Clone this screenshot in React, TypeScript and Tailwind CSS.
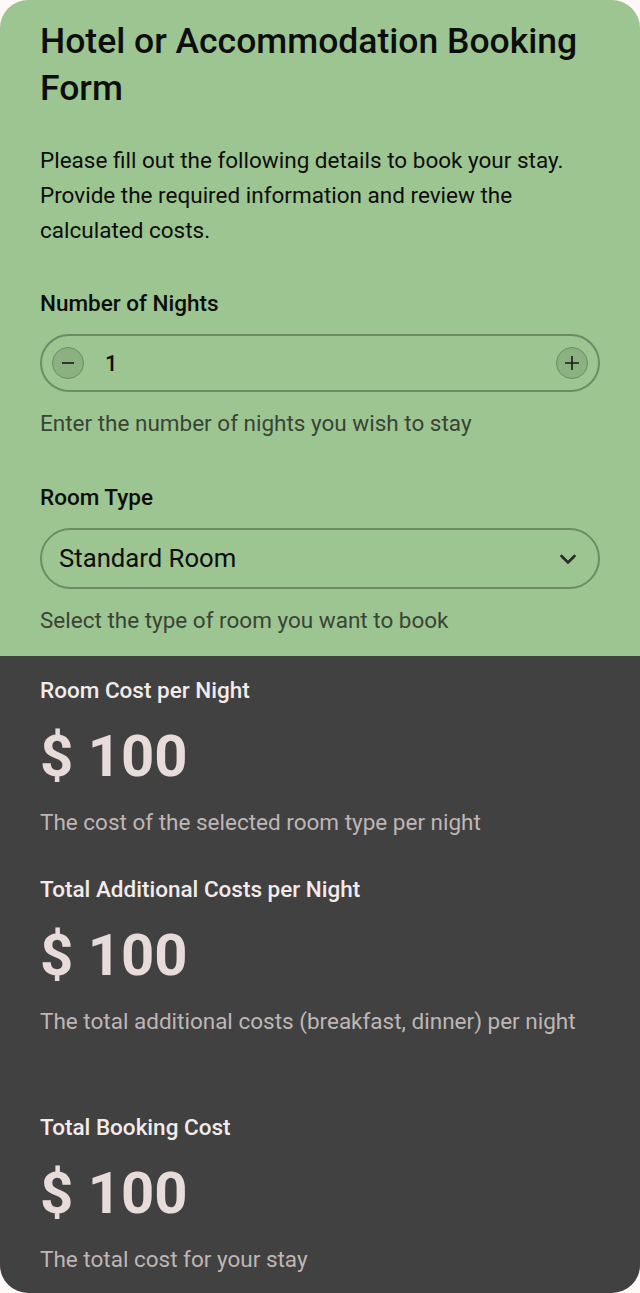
import React, { useState } from "react";

function CostBlock({ label, amount, note }: { label: string; amount: number; note: string }) {
    return (
        <div className="flex flex-col gap-[22px]">
            <p className="text-[22.5px] leading-7 font-medium text-[#f3ebea]">{label}</p>
            <p className="text-[58px] leading-[60px] font-bold text-[#e8dcdb]">$ {amount}</p>
            <p className="text-[22.5px] leading-7 text-[#bfb6b5]">{note}</p>
        </div>
    )
}

export default function App() {
    const [nights, setNights] = useState(1)

    return (
        <div className="min-h-screen bg-[#fff8f7] font-['Roboto',sans-serif]">
            <div className="rounded-[28px] overflow-hidden">
                <div className="bg-[#9dc591] px-10 pt-[18px] pb-[22px] text-[#0d0d0d]">
                    <h1 className="text-[35.5px] leading-[47px] font-medium">Hotel or Accommodation Booking Form</h1>
                    <p className="mt-[31px] text-[22.5px] leading-[35px]">
                        Please fill out the following details to book your stay. Provide the required information and review the calculated costs.
                    </p>

                    <div className="mt-[41px]">
                        <p className="text-[22.5px] leading-7 font-medium">Number of Nights</p>
                        <div className="mt-[17px] h-[58px] rounded-full border-2 border-[#6d8c64] flex items-center px-[10px]">
                            <button
                                onClick={() => setNights(Math.max(1, nights - 1))}
                                className="w-8 h-8 rounded-full bg-[#8bb180] border-[1.5px] border-[#6d8c64] flex items-center justify-center"
                            >
                                <svg width="16" height="16" viewBox="0 0 16 16"><path d="M2 8h12" stroke="#1a1a1a" strokeWidth="1.6" /></svg>
                            </button>
                            <span className="ml-[21px] flex-1 text-[22px] font-medium">{nights}</span>
                            <button
                                onClick={() => setNights(nights + 1)}
                                className="w-8 h-8 rounded-full bg-[#8bb180] border-[1.5px] border-[#6d8c64] flex items-center justify-center"
                            >
                                <svg width="18" height="18" viewBox="0 0 18 18"><path d="M2 9h14M9 2v14" stroke="#1a1a1a" strokeWidth="1.6" /></svg>
                            </button>
                        </div>
                        <p className="mt-[17px] text-[22.5px] leading-7 text-[#394437]">Enter the number of nights you wish to stay</p>
                    </div>

                    <div className="mt-[46px]">
                        <p className="text-[22.5px] leading-7 font-medium">Room Type</p>
                        <div className="mt-[17px] h-[61px] rounded-full border-2 border-[#6d8c64] flex items-center pl-[17px] pr-[20px]">
                            <span className="flex-1 text-[25.7px]">Standard Room</span>
                            <svg width="20" height="20" viewBox="0 0 20 20" fill="none">
                                <path d="M3.5 7l6.5 6.5L16.5 7" stroke="#2b2b2b" strokeWidth="2.6" strokeLinecap="round" strokeLinejoin="round" />
                            </svg>
                        </div>
                        <p className="mt-[17px] text-[22.5px] leading-7 text-[#394437]">Select the type of room you want to book</p>
                    </div>
                </div>

                <div className="bg-[#414141] px-10 pt-5 pb-5">
                    <CostBlock label="Room Cost per Night" amount={100} note="The cost of the selected room type per night" />
                    <div className="mt-[39px]">
                        <CostBlock label="Total Additional Costs per Night" amount={100} note="The total additional costs (breakfast, dinner) per night" />
                    </div>
                    <div className="mt-[78px]">
                        <CostBlock label="Total Booking Cost" amount={100} note="The total cost for your stay" />
                    </div>
                </div>
            </div>
        </div>
    )
}
